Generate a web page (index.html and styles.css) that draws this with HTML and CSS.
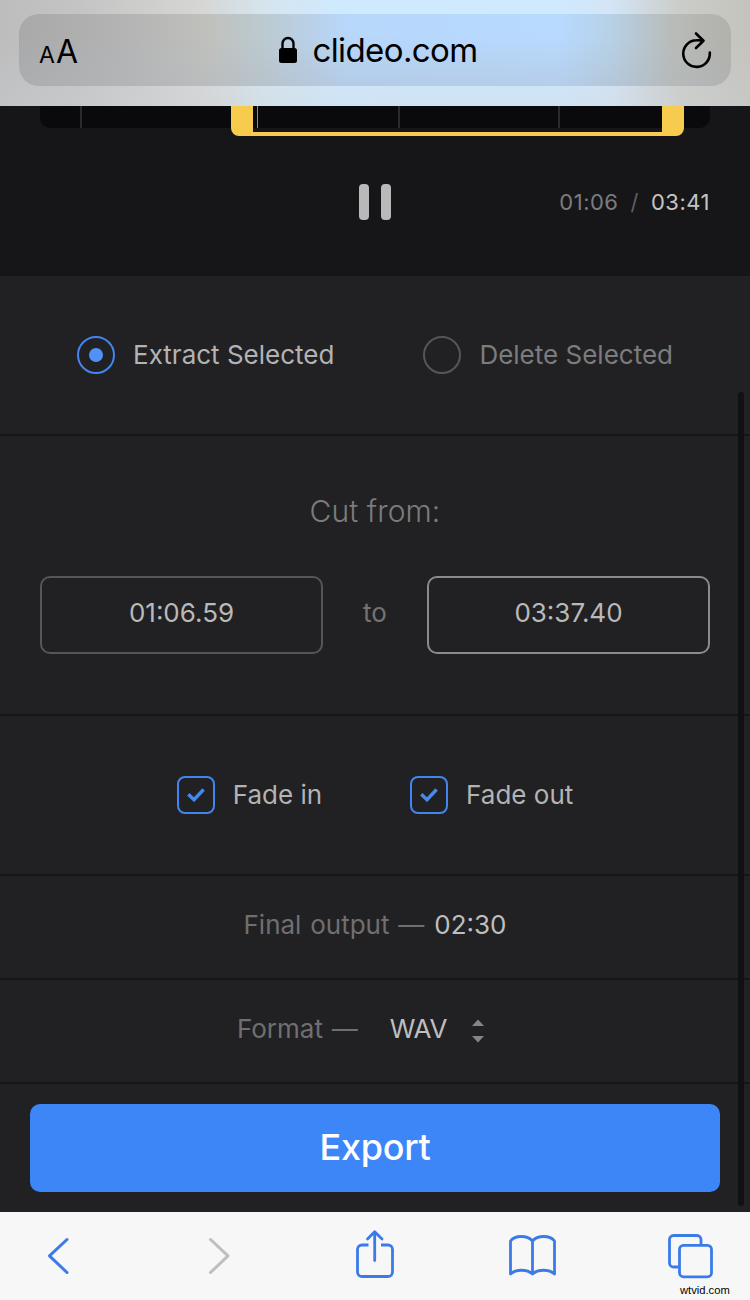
FILE: index.html
```html
<!DOCTYPE html>
<html lang="en">
<head>
    <meta charset="UTF-8">
    <meta name="viewport" content="width=device-width, initial-scale=1.0">
    <title>Audio Cutter</title>
    <link rel="stylesheet" href="styles.css">
</head>
<body>
    <header class="browser-bar">
        <div class="address">
            <div class="text-size"><span class="small-a">A</span><span class="big-a">A</span></div>
            <div class="domain">
                <svg width="20" height="28" viewBox="0 0 20 28">
                    <path d="M4.5 13V7.5a5.5 5.5 0 0 1 11 0V13" fill="none" stroke="#000" stroke-width="2.4"/>
                    <rect x="1" y="12" width="18" height="15" rx="2.5"/>
                </svg>
                <span>clideo.com</span>
            </div>
            <svg class="reload" width="34" height="38" viewBox="0 0 34 38" fill="none" stroke="#000" stroke-width="2.6" stroke-linecap="round" stroke-linejoin="round">
                <path d="M31.800 21.500A13.300 13.300 0 1 1 18.500 9.300q3.500-.2 7 .5M18 2.500l7.500 7.300L18 17"/>
            </svg>
        </div>
    </header>

    <main>
        <section class="player">
            <div class="timeline">
                <span class="tick"></span>
                <span class="tick"></span>
                <span class="tick"></span>
                <span class="tick"></span>
                <div class="selection"><span class="playhead"></span></div>
            </div>
            <div class="controls">
                <button class="pause" aria-label="Pause"><span></span><span></span></button>
                <div class="time"><span>01:06</span><span class="slash">/</span><span class="total">03:41</span></div>
            </div>
        </section>

        <section class="row modes">
            <label class="option active"><span class="radio"></span><span>Extract Selected</span></label>
            <label class="option"><span class="radio"></span><span>Delete Selected</span></label>
        </section>

        <section class="cut">
            <h2>Cut from:</h2>
            <div class="range">
                <input class="time-input" type="text" value="01:06.59" aria-label="Start">
                <span class="to">to</span>
                <input class="time-input focused" type="text" value="03:37.40" aria-label="End">
            </div>
        </section>

        <section class="row fades">
            <label class="option active">
                <span class="checkbox"><svg width="18" height="14" viewBox="0 0 18 14"><path d="M1.3 6.3l5.700 5.400L16.600 1.500" fill="none" stroke="#4589f0" stroke-width="3.4"/></svg></span>
                <span>Fade in</span>
            </label>
            <label class="option active">
                <span class="checkbox"><svg width="18" height="14" viewBox="0 0 18 14"><path d="M1.3 6.3l5.700 5.400L16.600 1.500" fill="none" stroke="#4589f0" stroke-width="3.4"/></svg></span>
                <span>Fade out</span>
            </label>
        </section>

        <section class="row output">
            <span>Final output —</span><span class="value">02:30</span>
        </section>

        <section class="row format">
            <span>Format —</span><span class="value">WAV</span>
            <svg class="arrows" width="14" height="24" viewBox="0 0 14 24" fill="#858587"><path d="M1 7l6-6.500L13 7zM1 17l6 6.500 6-6.500z"/></svg>
        </section>

        <section class="export">
            <button class="export-btn">Export</button>
        </section>
        <div class="scrollbar"></div>
    </main>

    <footer class="toolbar">
        <svg width="750" height="88" viewBox="0 0 750 88" fill="none" stroke="#3b7be8" stroke-width="3" stroke-linecap="round" stroke-linejoin="round">
            <path d="M67 27.500L49.500 43.800 67 60.500"/>
            <path d="M210.500 27.500L228 43.800l-17.500 16.700" stroke="#bebebe"/>
            <!-- share -->
            <path d="M368.500 33H362a4.500 4.500 0 0 0-4.500 4.500V60a4.500 4.500 0 0 0 4.500 4.500h26a4.500 4.500 0 0 0 4.500-4.500V37.500A4.500 4.500 0 0 0 388 33h-7" stroke-width="2.800" stroke-linecap="butt"/>
            <path d="M374.700 48.500V20M367.500 27l7.200-7.200L382 27" stroke-width="2.800"/>
            <!-- bookmarks -->
            <path d="M532.500 29c-5-6-17.500-6-22 0v33c5.500-5 16.500-5 22 0 5.500-5 16.500-5 22 0V29c-4.500-6-17-6-22 0v33" stroke-width="2.800"/>
            <!-- tabs -->
            <path d="M678.500 55h-5a4 4 0 0 1-4-4V27.500a4 4 0 0 1 4-4H697a4 4 0 0 1 4 4V33" stroke-width="2.800" stroke-linecap="butt"/>
            <rect x="679.500" y="33.300" width="32" height="31.500" rx="4" stroke-width="2.800"/>
        </svg>
        <span class="watermark">wtvid.com</span>
    </footer>
</body>
</html>
```
FILE: styles.css
```css
* {
    box-sizing: border-box;
}

body {
    margin: 0;
    width: 750px;
    height: 1300px;
    overflow: hidden;
    background: #212123;
    color: #7c7c7e;
    font-family: Inter, 'Liberation Sans', sans-serif;
    font-size: 26px;
    font-weight: 400;
}

button,
input {
    font-family: inherit;
    margin: 0;
    padding: 0;
}

svg {
    display: block;
    flex: none;
}

/* Browser address bar */
.browser-bar {
    height: 106px;
    padding: 14px 19px 0;
    background:
        linear-gradient(180deg, rgba(206, 213, 220, 0) 40%, rgba(206, 211, 218, 0.3) 100%),
        linear-gradient(90deg, #bdbdbd 0, #c4c4c4 80px, #d6d6d4 200px, #d5e5ee 265px, #cfeaff 340px, #cfe9ff 560px, #d4e5f6 610px, #cbcdc8 680px, #c4c3bd 750px);
}

.address {
    height: 72px;
    padding: 0 19px 0 20px;
    border-radius: 20px;
    display: flex;
    align-items: center;
    justify-content: space-between;
    color: #000;
    background:
        linear-gradient(180deg, rgba(175, 182, 192, 0) 30%, rgba(175, 182, 192, 0.35) 100%),
        linear-gradient(90deg, #a9a9a9 0, #b3b3b3 100px, #c0c1bd 190px, #bccad1 245px, #b7d7fb 330px, #b8daff 540px, #b7d0e5 595px, #b8bbb7 655px, #b2b1ab 712px);
}

.text-size {
    width: 60px;
    padding-top: 7px;
    line-height: 40px;
}

.small-a {
    font-size: 23px;
}

.big-a {
    font-size: 32px;
    margin-left: 1px;
}

.domain {
    display: flex;
    align-items: center;
    gap: 14px;
    margin-left: 5px;
    font-size: 33px;
    letter-spacing: -0.6px;
}

.reload {
    margin-left: 26px;
}

/* Player */
main {
    position: relative;
    height: 1106px;
}

.player {
    height: 170px;
    padding: 0 40px;
    background: #161618;
}

.timeline {
    position: relative;
    display: flex;
    height: 22px;
    padding-left: 40px;
    background: #0a0a0c;
    border-radius: 0 0 10px 10px;
}

.tick {
    flex: none;
    width: 159.2px;
    border-left: 2px solid #2b2b2d;
}

.tick:last-of-type {
    width: 2px;
}

.selection {
    position: absolute;
    left: 191px;
    top: 0;
    width: 453px;
    height: 30px;
    border: solid #f6cb4e;
    border-width: 0 22px 4px;
    border-radius: 0 0 8px 8px;
}

.playhead {
    display: block;
    width: 1px;
    height: 22px;
    margin-left: 4px;
    background: #8b8b8d;
}

.controls {
    display: grid;
    grid-template-columns: 1fr auto 1fr;
    align-items: center;
    height: 148px;
}

.pause {
    grid-column: 2;
    display: flex;
    gap: 12px;
    border: 0;
    background: none;
}

.pause span {
    width: 10px;
    height: 36px;
    border-radius: 4px;
    background: #b9b9ba;
}

.time {
    display: flex;
    justify-content: flex-end;
    font-size: 22px;
    letter-spacing: 0.5px;
}

.slash {
    margin: 0 12px;
    color: #5f5f61;
}

.total {
    color: #c4c4c5;
}

/* Settings rows */
.row {
    display: flex;
    align-items: center;
    justify-content: center;
    border-bottom: 2px solid #161618;
}

.modes {
    height: 160px;
    gap: 89px;
}

.option {
    display: flex;
    align-items: center;
    gap: 18px;
}

.option span:last-child {
    padding-bottom: 1px;
}

.option.active {
    color: #b3b3b4;
}

.radio {
    width: 38px;
    height: 38px;
    border: 2px solid #565658;
    border-radius: 50%;
    display: flex;
    align-items: center;
    justify-content: center;
}

.active .radio {
    border-color: #4285f0;
}

.active .radio::after {
    content: "";
    width: 14px;
    height: 14px;
    border-radius: 50%;
    background: #5291f7;
}

.cut {
    height: 280px;
    padding: 55px 40px 0;
    border-bottom: 2px solid #161618;
}

.cut h2 {
    margin: 0 0 45px;
    text-align: center;
    font-size: 30px;
    line-height: 40px;
    font-weight: 300;
    letter-spacing: 0.1px;
}

.range {
    display: flex;
    align-items: center;
    justify-content: space-between;
}

.time-input {
    width: 283px;
    height: 78px;
    padding-bottom: 5px;
    border: 2px solid #565658;
    border-radius: 10px;
    background: none;
    color: #b9b9ba;
    text-align: center;
    font-size: 26px;
}

.time-input.focused {
    border-color: #8b8b8c;
}

.to {
    padding-bottom: 5px;
    color: #737375;
}

.fades {
    height: 160px;
    gap: 88px;
}

.checkbox {
    width: 38px;
    height: 38px;
    border: 2px solid #4285f0;
    border-radius: 8px;
    display: flex;
    align-items: center;
    justify-content: center;
}

.output,
.format {
    height: 104px;
    padding-bottom: 5px;
    color: #6f6f71;
    word-spacing: 1.5px;
}

.output .value {
    margin-left: 10px;
}

.format .value {
    margin: 0 24px 0 32px;
    letter-spacing: -0.3px;
}

.value {
    color: #bebebf;
}

.format {
    padding-right: 28px;
}

.arrows {
    margin-top: 5px;
}

.export {
    padding: 20px 30px;
    height: 128px;
}

.export-btn {
    display: block;
    width: 690px;
    height: 88px;
    padding-bottom: 2px;
    border: 0;
    border-radius: 10px;
    background: #3c86f7;
    color: #fff;
    font-size: 36px;
    font-weight: 500;
    letter-spacing: -0.3px;
}

.scrollbar {
    position: absolute;
    top: 286px;
    left: 738px;
    width: 6px;
    height: 814px;
    border-radius: 3px;
    background: #111112;
}

/* Bottom toolbar */
.toolbar {
    position: relative;
    height: 88px;
    background: #f7f7f7;
}

.watermark {
    position: absolute;
    left: 680px;
    top: 71px;
    color: #000;
    font-family: 'Liberation Sans', sans-serif;
    font-size: 11.2px;
    line-height: 14px;
}
```
